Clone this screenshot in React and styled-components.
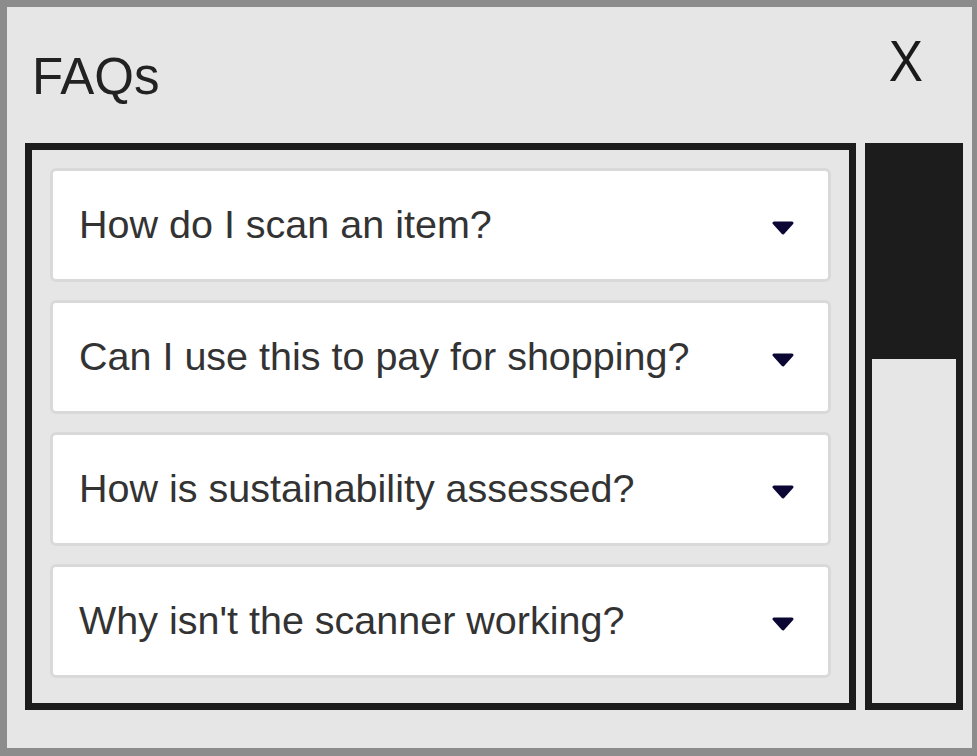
import React from "react";
import styled, { createGlobalStyle } from "styled-components";

const Global = createGlobalStyle`
  html, body { margin: 0; padding: 0; background: #e6e6e6; }
  body { font-family: "Liberation Sans", Arial, sans-serif; }
`;

const Modal = styled.div`
  box-sizing: border-box;
  width: 977px;
  height: 756px;
  background: #e6e6e6;
  border-style: solid;
  border-color: #8c8c8c;
  border-width: 7px 5px 8px 7px;
  display: flex;
  flex-direction: column;
  overflow: hidden;
`;

const Header = styled.div`
  box-sizing: border-box;
  height: 136px;
  flex: none;
  display: flex;
  justify-content: space-between;
  align-items: flex-start;
  padding: 0 49px 0 25px;
`;

const Title = styled.h1`
  margin: 44px 0 0 0;
  font-size: 51px;
  line-height: 1;
  font-weight: 400;
  color: #222222;
`;

const Close = styled.button`
  margin-top: 26px;
  padding: 0;
  border: none;
  background: transparent;
  font-family: "Liberation Sans", Arial, sans-serif;
  font-size: 57px;
  line-height: 1;
  font-weight: 400;
  color: #1a1a1a;
  transform: scaleX(0.9);
  transform-origin: right top;
  cursor: pointer;
`;

const Body = styled.div`
  flex: none;
  display: flex;
  gap: 9px;
  padding: 0 9px 0 18px;
`;

const ListBox = styled.div`
  box-sizing: border-box;
  flex: 1;
  height: 567px;
  border: 7px solid #1c1c1c;
  padding: 18px;
  display: flex;
  flex-direction: column;
  gap: 18px;
  overflow: hidden;
`;

const Card = styled.div`
  box-sizing: border-box;
  height: 114px;
  flex: none;
  background: #ffffff;
  border: 3px solid #d9d9d9;
  border-radius: 6px;
  display: flex;
  align-items: center;
  justify-content: space-between;
  padding: 0 34px 0 26px;
`;

const Question = styled.span`
  font-size: 39.5px;
  line-height: 1;
  color: #333333;
  white-space: nowrap;
`;

const CaretIcon = styled.svg`
  width: 22px;
  height: 14px;
  margin-top: 6px;
  flex: none;
`;

const Track = styled.div`
  box-sizing: border-box;
  width: 98px;
  height: 567px;
  border: 7px solid #1c1c1c;
  background: #e6e6e6;
  flex: none;
`;

const Thumb = styled.div`
  margin: -7px -7px 0 -7px;
  height: 216px;
  background: #1c1c1c;
`;

const Caret = () => (
  <CaretIcon viewBox="0 0 22 14">
    <polygon
      points="2,2 20,2 11,12"
      fill="#0b0735"
      stroke="#0b0735"
      strokeWidth="3"
      strokeLinejoin="round"
    />
  </CaretIcon>
);

const questions = [
  "How do I scan an item?",
  "Can I use this to pay for shopping?",
  "How is sustainability assessed?",
  "Why isn't the scanner working?",
];

export default function App() {
  return (
    <>
      <Global />
      <Modal>
        <Header>
          <Title>FAQs</Title>
          <Close aria-label="Close">X</Close>
        </Header>
        <Body>
          <ListBox>
            {questions.map((q) => (
              <Card key={q}>
                <Question>{q}</Question>
                <Caret />
              </Card>
            ))}
          </ListBox>
          <Track>
            <Thumb />
          </Track>
        </Body>
      </Modal>
    </>
  );
}
